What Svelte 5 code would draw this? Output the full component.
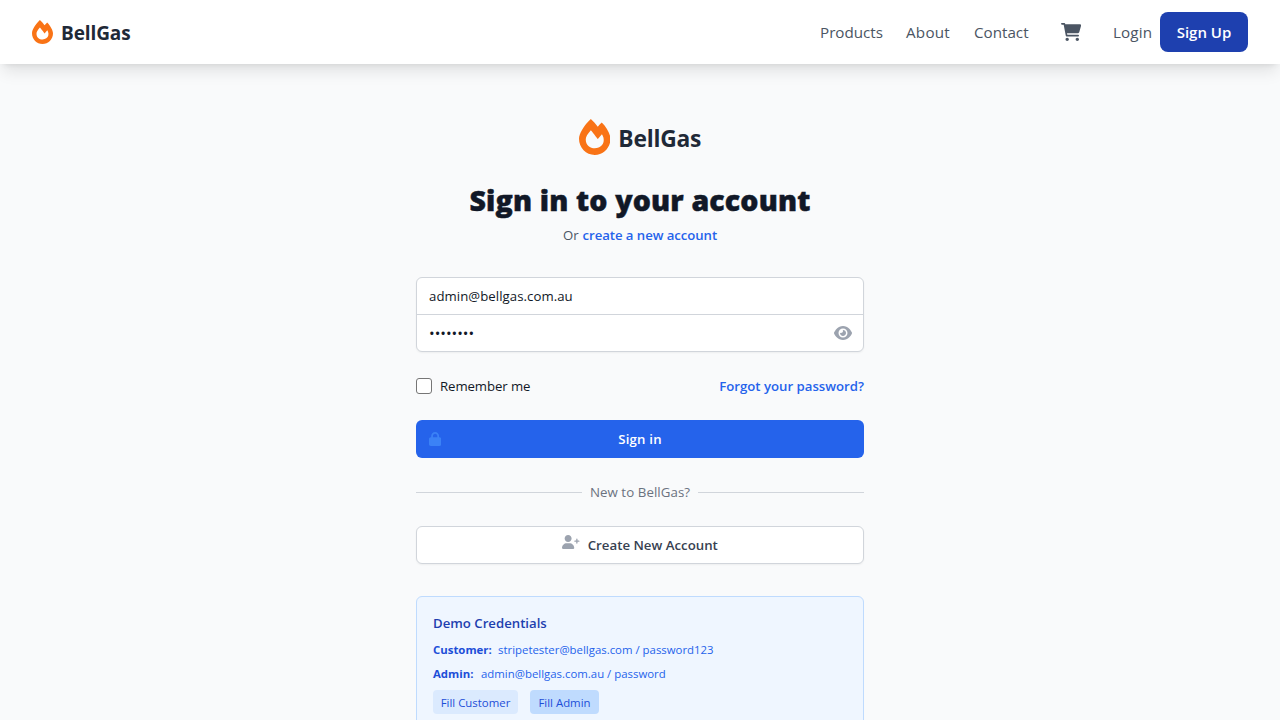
<script>
  const icons = {
    fire: { w: 448, d: 'M323.5 51.25C302.8 70.5 284 90.75 267.4 111.1C240.1 73.62 206.2 35.5 168 0C69.75 91.12 0 210 0 281.6C0 408.9 100.2 512 224 512s224-103.1 224-230.4C448 228.4 396 118.5 323.5 51.25zM304.1 391.9C282.4 407 255.8 416 226.9 416c-72.13 0-130.9-47.73-130.9-125.2c0-38.63 24.24-72.64 72.74-130.8c7 8 98.88 125.4 98.88 125.4l58.63-66.88c4.125 6.75 7.867 13.52 11.24 19.9C364.9 290.6 353.4 357.4 304.1 391.9z' },
    cart: { w: 576, d: 'M96 0C107.5 0 117.4 8.19 119.6 19.51L121.1 32H541.8C562.1 32 578.3 52.25 572.6 72.66L518.6 264.7C514.7 278.5 502.1 288 487.8 288H170.7L179.9 336H488C501.3 336 512 346.7 512 360C512 373.3 501.3 384 488 384H159.1C148.5 384 138.6 375.8 136.4 364.5L76.14 48H24C10.75 48 0 37.25 0 24C0 10.75 10.75 0 24 0H96zM128 464C128 437.5 149.5 416 176 416C202.5 416 224 437.5 224 464C224 490.5 202.5 512 176 512C149.5 512 128 490.5 128 464zM512 464C512 490.5 490.5 512 464 512C437.5 512 416 490.5 416 464C416 437.5 437.5 416 464 416C490.5 416 512 437.5 512 464z' },
    eye: { w: 576, d: 'M279.6 160.4C282.4 160.1 285.2 160 288 160C341 160 384 202.1 384 256C384 309 341 352 288 352C234.1 352 192 309 192 256C192 253.2 192.1 250.4 192.4 247.6C201.7 252.1 212.5 256 224 256C259.3 256 288 227.3 288 192C288 180.5 284.1 169.7 279.6 160.4zM480.6 112.6C527.4 156 558.7 207.1 573.5 243.7C576.8 251.6 576.8 260.4 573.5 268.3C558.7 304 527.4 355.1 480.6 399.4C433.5 443.2 368.8 480 288 480C207.2 480 142.5 443.2 95.42 399.4C48.62 355.1 17.34 304 2.461 268.3C-.8205 260.4-.8205 251.6 2.461 243.7C17.34 207.1 48.62 156 95.42 112.6C142.5 68.84 207.2 32 288 32C368.8 32 433.5 68.84 480.6 112.6V112.6zM288 112C208.5 112 144 176.5 144 256C144 335.5 208.5 400 288 400C367.5 400 432 335.5 432 256C432 176.5 367.5 112 288 112z' },
    lock: { w: 448, d: 'M144 144v48H304V144c0-44.2-35.8-80-80-80s-80 35.8-80 80zM80 192V144C80 64.5 144.5 0 224 0s144 64.5 144 144v48h16c35.3 0 64 28.7 64 64V448c0 35.3-28.7 64-64 64H64c-35.3 0-64-28.7-64-64V256c0-35.3 28.7-64 64-64H80z' },
    userPlus: { w: 640, d: 'M224 256c70.7 0 128-57.31 128-128S294.7 0 224 0 96 57.31 96 128s57.3 128 128 128zm50.7 48H173.3C77.61 304 0 381.6 0 477.3c0 19.14 15.52 34.67 34.66 34.67h378.7C432.5 512 448 496.5 448 477.3C448 381.6 370.4 304 274.7 304zM616 200h-48v-48C568 138.8 557.3 128 544 128s-24 10.75-24 24v48h-48C458.8 200 448 210.8 448 224s10.75 24 24 24h48v48C520 309.3 530.8 320 544 320s24-10.75 24-24v-48h48C629.3 248 640 237.3 640 224S629.3 200 616 200z' }
  };
</script>

{#snippet icon(name, size)}
  <svg viewBox="0 0 {icons[name].w} 512" width={(size * icons[name].w) / 512} height={size} fill="currentColor" aria-hidden="true">
    <path d={icons[name].d} />
  </svg>
{/snippet}

<div class="page">
  <nav>
    <div class="brand small">{@render icon('fire', 24)}<span class="brand-name">BellGas</span></div>
    <div class="links">
      <span class="link products">Products</span>
      <span class="link about">About</span>
      <span class="link contact">Contact</span>
      <span class="cart">{@render icon('cart', 18)}</span>
      <span class="link login">Login</span>
      <button class="signup"><span>Sign Up</span></button>
    </div>
  </nav>

  <main>
    <div class="brand large">{@render icon('fire', 36)}<span class="brand-name">BellGas</span></div>
    <h2><span>Sign in to your account</span></h2>
    <p class="or"><span class="or-word">Or</span><span class="create">create a new account</span></p>

    <div class="fields">
      <div class="field"><span class="email">admin@bellgas.com.au</span></div>
      <div class="field second"><span class="dots">••••••••</span><span class="eye">{@render icon('eye', 16)}</span></div>
    </div>

    <div class="options">
      <span class="box"></span>
      <span class="remember">Remember me</span>
      <span class="forgot">Forgot your password?</span>
    </div>

    <button class="signin"><span class="lock">{@render icon('lock', 14)}</span><span class="signin-text">Sign in</span></button>

    <div class="divider"><i></i><span>New to BellGas?</span><i></i></div>

    <button class="new-account"><span class="plus">{@render icon('userPlus', 14)}</span><span class="new-text">Create New Account</span></button>

    <section class="demo">
      <h3><span>Demo Credentials</span></h3>
      <p><b class="c1">Customer:</b><span class="v1">stripetester@bellgas.com / password123</span></p>
      <p><b class="c2">Admin:</b><span class="v2">admin@bellgas.com.au / password</span></p>
      <div class="fills">
        <button class="fill-customer"><span>Fill Customer</span></button>
        <button class="fill-admin"><span>Fill Admin</span></button>
      </div>
    </section>
  </main>
</div>

<style>
  :global(body) { overflow: hidden; }
  .page { height: 720px; overflow: hidden; background: #f9fafb; font-family: "Open Sans", "Noto Sans", sans-serif; color: #111827; }
  .page, .page * { box-sizing: border-box; }
  span, b { white-space: nowrap; }
  svg { display: block; flex: none; }
  button { font: inherit; border: 0; margin: 0; padding: 0; cursor: pointer; }
  h2, h3, p { margin: 0; }

  nav { height: 64px; padding: 0 32px; display: flex; align-items: center; justify-content: space-between; background: #fff; box-shadow: 0 10px 15px -3px rgb(0 0 0 / .1), 0 4px 6px -4px rgb(0 0 0 / .1); position: relative; }
  .brand { display: flex; align-items: center; color: #f97316; }
  .brand-name { color: #1f2937; font-weight: 700; }
  .small { gap: 8px; }
  .small .brand-name { font-size: 19px; line-height: 28px; letter-spacing: -.1px; padding-top: 2px; }
  .links { display: flex; align-items: center; color: #4b5563; font-size: 15.2px; line-height: 24px; }
  .link { display: block; }
  .products { width: 62px; margin-right: 24px; }
  .about { width: 44px; margin-right: 24px; letter-spacing: .25px; }
  .contact { width: 55px; margin-right: 32px; }
  .cart { width: 20px; margin-right: 32px; }
  .login { width: 39px; margin-right: 8px; letter-spacing: .15px; }
  .signup { width: 88px; height: 40px; border-radius: 8px; background: #1e40af; color: #fff; font-weight: 600; }
  .signup span { font-size: 15px; }

  main { width: 448px; margin: 0 auto; padding-top: 54px; }
  .large { justify-content: center; gap: 8px; height: 37px; }
  .large .brand-name { font-size: 22.8px; line-height: 32px; letter-spacing: -.2px; padding-top: 5px; }
  h2 { margin-top: 27px; height: 36px; display: flex; justify-content: center; font-size: 28.5px; line-height: 36px; font-weight: 800; -webkit-text-stroke: .5px currentColor; letter-spacing: .16px; }
  .or { display: flex; justify-content: center; gap: 4px; margin-top: 7px; height: 20px; font-size: 13.2px; line-height: 20px; color: #4b5563; }
  .create { color: #2563eb; font-weight: 600; letter-spacing: -.06px; }

  .fields { margin-top: 32px; height: 75px; border: 1px solid #d1d5db; border-radius: 6px; background: #fff; box-shadow: 0 1px 2px rgb(0 0 0 / .05); font-size: 13.2px; }
  .field { height: 36px; padding: 0 11px 0 12px; display: flex; align-items: center; }
  .email { letter-spacing: .06px; }
  .second { height: 37px; border-top: 1px solid #d1d5db; justify-content: space-between; }
  .dots { font-size: 15px; }
  .eye { color: #9ca3af; }

  .options { margin-top: 24px; height: 20px; display: flex; align-items: center; font-size: 13.2px; line-height: 20px; }
  .box { width: 16px; height: 16px; border: 1px solid #767676; border-radius: 3px; background: #fff; margin-right: 8px; }
  .remember { letter-spacing: -.08px; }
  .forgot { margin-left: auto; color: #2563eb; font-weight: 600; }

  .signin { margin-top: 24px; width: 448px; height: 38px; display: grid; grid-template-columns: 30px 1fr 30px; align-items: center; border-radius: 6px; background: #2563eb; color: #fff; font-size: 13.2px; font-weight: 600; }
  .signin-text { letter-spacing: .2px; }
  .lock { padding-left: 13px; color: #3b82f6; }

  .divider { margin-top: 24px; height: 20px; display: flex; align-items: center; gap: 8px; font-size: 13.3px; line-height: 20px; color: #6b7280; }
  .divider i { flex: 1; height: 1px; background: #d1d5db; }
  .divider span { letter-spacing: .06px; }

  .new-account { margin-top: 24px; width: 448px; height: 38px; display: flex; align-items: center; justify-content: center; gap: 8px; border: 1px solid #d1d5db; border-radius: 6px; background: #fff; box-shadow: 0 1px 2px rgb(0 0 0 / .05); color: #374151; font-size: 13.25px; font-weight: 600; }
  .plus { color: #9ca3af; padding-bottom: 6px; }

  .demo { margin-top: 32px; height: 160px; padding: 16px; border: 1px solid #bfdbfe; border-radius: 6px; background: #eff6ff; }
  h3 { height: 20px; margin-bottom: 9px; font-size: 13.2px; line-height: 20px; font-weight: 600; color: #1e40af; }
  .demo p { display: flex; height: 16px; margin-bottom: 8px; font-size: 11.4px; line-height: 16px; color: #2563eb; }
  .demo b { color: #1d4ed8; font-weight: 700; }
  .c1 { width: 65px; }
  .c2 { width: 48px; }
  .fills { display: flex; gap: 12px; font-size: 11.4px; color: #1d4ed8; }
  .fills button { height: 24px; border-radius: 4px; color: inherit; }
  .fill-customer { width: 85px; background: #dbeafe; }
  .fill-admin { width: 69px; background: #bfdbfe; }
</style>
